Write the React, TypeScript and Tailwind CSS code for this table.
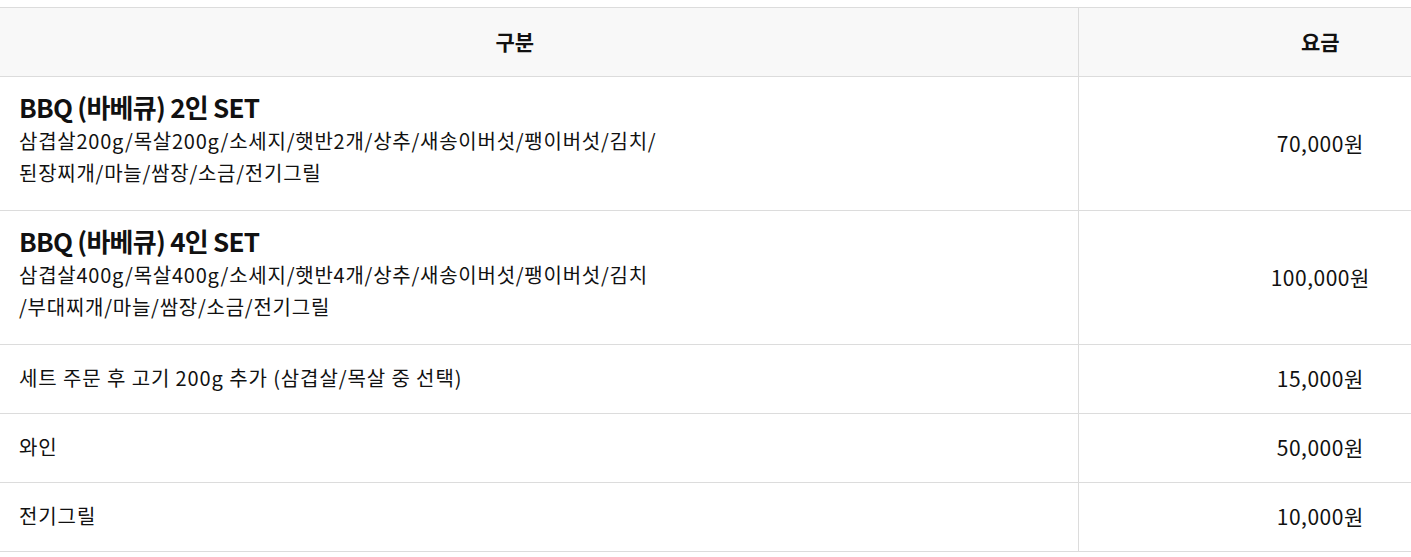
import React from 'react';

type Row = {
  title?: string;
  lines?: string[];
  label?: string;
  price: string;
};

const rows: Row[] = [
  {
    title: 'BBQ (바베큐) 2인 SET',
    lines: ['삼겹살200g/목살200g/소세지/햇반2개/상추/새송이버섯/팽이버섯/김치/', '된장찌개/마늘/쌈장/소금/전기그릴'],
    price: '70,000원',
  },
  {
    title: 'BBQ (바베큐) 4인 SET',
    lines: ['삼겹살400g/목살400g/소세지/햇반4개/상추/새송이버섯/팽이버섯/김치', '/부대찌개/마늘/쌈장/소금/전기그릴'],
    price: '100,000원',
  },
  { label: '세트 주문 후 고기 200g 추가 (삼겹살/목살 중 선택)', price: '15,000원' },
  { label: '와인', price: '50,000원' },
  { label: '전기그릴', price: '10,000원' },
];

export default function App() {
  return (
    <div className="w-full overflow-hidden bg-white pt-[7px] text-[#111] font-['Noto_Sans_CJK_KR','Noto_Sans',sans-serif]">
      <table className="w-full border-collapse table-fixed">
        <colgroup>
          <col className="w-[1078px]" />
          <col />
        </colgroup>
        <thead>
          <tr className="bg-[#f8f8f8]">
            <th className="h-[69px] border-y border-[#dcdcdc] pr-[48px] text-center text-[21px] font-bold">구분</th>
            <th className="h-[69px] border border-r-0 border-[#dcdcdc] pl-[151px] text-center text-[21px] font-bold">요금</th>
          </tr>
        </thead>
        <tbody>
          {rows.map((row, i) => (
            <tr key={i}>
              <td
                className={
                  (row.title ? 'h-[134px] pb-[9px]' : 'h-[69px] pb-[2px]') +
                  ' border-b border-[#dcdcdc] pl-[19px] align-middle'
                }
              >
                {row.title ? (
                  <div>
                    <div className="text-[26px] font-bold leading-[36px] tracking-[-0.75px]">{row.title}</div>
                    {row.lines!.map((l, j) => (
                      <div key={j} className="text-[20px] leading-[32px] tracking-[0.75px]">
                        {l}
                      </div>
                    ))}
                  </div>
                ) : (
                  <div className="text-[20px] leading-[28px] tracking-[0.9px]">{row.label}</div>
                )}
              </td>
              <td className="border-b border-l border-[#dcdcdc] pl-[151px] text-center text-[21px] tracking-[0.5px]">
                {row.price}
              </td>
            </tr>
          ))}
        </tbody>
      </table>
    </div>
  );
}
